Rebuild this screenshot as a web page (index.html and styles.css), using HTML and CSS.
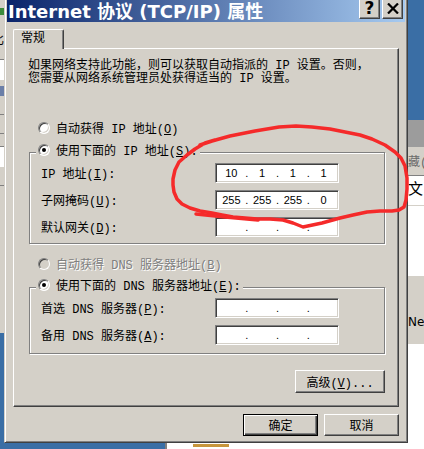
FILE: index.html
```html
<!DOCTYPE html>
<html lang="zh-CN">
<head>
  <meta charset="UTF-8" />
  <title>Internet 协议 (TCP/IP) 属性</title>
  <link rel="stylesheet" href="styles.css">
</head>
<body>
  <!-- windows behind the dialog -->
  <div class="win-left">
    <div class="wl-icon"></div>
    <div class="wl-char">比</div>
    <div class="wl-box"></div>
    <div class="wl-blue"></div>
    <div class="wl-line"></div>
    <div class="wl-line"></div>
    <div class="wl-box"></div>
    <div class="wl-line"></div>
  </div>

  <div class="win-right">
    <div class="wr-caption"></div>
    <div class="wr-bar">藏(</div>
    <div class="wr-row">文</div>
    <div class="wr-list"></div>
    <div class="wr-gray">Net</div>
  </div>

  <div class="win-bottom"><span class="wb-tan"></span></div>

  <div class="dialog">
    <div class="titlebar">
      <span class="title">Internet 协议 (TCP/IP) 属性</span>
      <span class="cap-btn">?</span>
      <span class="cap-btn">
        <svg width="12" height="11" viewBox="0 0 12 11"><path d="M1 0.5 L11 10.5 M11 0.5 L1 10.5" stroke="#000" stroke-width="2.2" fill="none"/></svg>
      </span>
    </div>

    <div class="dlg-body">
      <div class="tabs"><div class="tab">常规</div></div>

      <div class="panel">
        <p class="intro">如果网络支持此功能，则可以获取自动指派的 IP 设置。否则，<br>您需要从网络系统管理员处获得适当的 IP 设置。</p>

        <div class="radio r-first"><span class="rb"></span><span>自动获得 IP 地址<span class="key">(<u>O</u>)</span></span></div>
        <div class="radio r-legend"><span class="rb on"></span><span>使用下面的 IP 地址<span class="key">(<u>S</u>):</span></span></div>
        <div class="group">
          <span class="lbl">IP 地址<span class="key">(<u>I</u>):</span></span>
          <div class="ip"><span class="oct">10</span><span class="sep">.</span><span class="oct">1</span><span class="sep">.</span><span class="oct">1</span><span class="sep">.</span><span class="oct">1</span></div>
          <span class="lbl">子网掩码<span class="key">(<u>U</u>):</span></span>
          <div class="ip"><span class="oct">255</span><span class="sep">.</span><span class="oct">255</span><span class="sep">.</span><span class="oct">255</span><span class="sep">.</span><span class="oct">0</span></div>
          <span class="lbl">默认网关<span class="key">(<u>D</u>):</span></span>
          <div class="ip"><span class="oct"></span><span class="sep">.</span><span class="oct"></span><span class="sep">.</span><span class="oct"></span><span class="sep">.</span><span class="oct"></span></div>
        </div>

        <div class="radio r-dns disabled"><span class="rb"></span><span>自动获得 DNS 服务器地址<span class="key">(<u>B</u>)</span></span></div>
        <div class="radio r-legend"><span class="rb on"></span><span>使用下面的 DNS 服务器地址<span class="key">(<u>E</u>):</span></span></div>
        <div class="group group-dns">
          <span class="lbl">首选 DNS 服务器<span class="key">(<u>P</u>):</span></span>
          <div class="ip"><span class="oct"></span><span class="sep">.</span><span class="oct"></span><span class="sep">.</span><span class="oct"></span><span class="sep">.</span><span class="oct"></span></div>
          <span class="lbl">备用 DNS 服务器<span class="key">(<u>A</u>):</span></span>
          <div class="ip"><span class="oct"></span><span class="sep">.</span><span class="oct"></span><span class="sep">.</span><span class="oct"></span><span class="sep">.</span><span class="oct"></span></div>
        </div>

        <button class="btn adv">高级<span class="key">(<u>V</u>)...</span></button>
      </div>

      <div class="actions">
        <button class="btn default">确定</button>
        <button class="btn">取消</button>
      </div>
    </div>
  </div>

  <!-- red marker scribble drawn over the screenshot -->
  <svg class="scribble" width="424" height="449" viewBox="0 0 424 449">
    <polyline fill="none" stroke="#f52a2a" stroke-width="3.5" stroke-linejoin="round" stroke-linecap="round"
      points="200,145 212,141 230,136 255,131 279,127 296,126 312,127 330,129 345,132 360,135 372,139 385,145 395,152 401,158 405,166 407,178 407,189 406,200 404,207 399,210 392,211 380,211 367,212 353,215 340,218 322,223 303,227 293,223 283,220 270,219 257,219 245,218 233,217 222,215 212,213 200,211 190,208 182,204 177,199 174,192 173,185 173,179 175,170 179,162 187,155 195,149 205,143 215,140"/>
    <polyline fill="none" stroke="#f52a2a" stroke-width="3.5" stroke-linejoin="round" stroke-linecap="round"
      points="196,214 225,217 258,220"/>
  </svg>
</body>
</html>
```

FILE: styles.css
```css
body {
  margin: 0;
  width: 424px;
  height: 449px;
  overflow: hidden;
  position: relative;
  background: #3a6ea5;
  font-family: "Liberation Mono", "Noto Sans CJK SC", monospace;
  font-size: 12px;
  color: #000;
}

/* background windows */
.win-left {
  position: absolute;
  left: 0;
  top: 0;
  width: 6px;
  height: 333px;
  background: #d4d0c8;
  display: flex;
  flex-direction: column;
}

.wl-icon {
  margin-top: 8px;
  height: 7px;
  background: #3c8c3c;
}

.wl-char {
  margin-top: 20px;
  margin-left: -8px;
  line-height: 12px;
}

.wl-box {
  margin-top: 12px;
  height: 20px;
  background: #fff;
  border-top: 1px solid #808080;
}

.wl-blue {
  margin-top: 6px;
  height: 10px;
  background: #6b7fa8;
}

.wl-line {
  margin-top: 18px;
  height: 1px;
  background: #808080;
}

.win-right {
  position: absolute;
  left: 398px;
  top: 120px;
  width: 30px;
  bottom: 0;
  background: #fff;
  display: flex;
  flex-direction: column;
}

.wr-caption {
  height: 27px;
  background: #9c9c9c;
}

.wr-bar {
  height: 28px;
  background: #d4d0c8;
  border-bottom: 1px solid #808080;
  padding-left: 10px;
  line-height: 32px;
  color: #6a6a6a;
  white-space: nowrap;
}

.wr-row {
  height: 29px;
  border-bottom: 1px solid #d4d0c8;
  padding-left: 10px;
  font-size: 15px;
  line-height: 30px;
}

.wr-list {
  height: 70px;
}

.wr-gray {
  height: 68px;
  background: #d4d0c8;
  padding-left: 10px;
  font-family: "DejaVu Sans", sans-serif;
  line-height: 18px;
  padding-top: 37px;
  box-sizing: border-box;
}

.win-bottom {
  position: absolute;
  left: 165px;
  top: 440px;
  right: 0;
  bottom: 0;
  background: #fff;
  border-left: 2px solid #808080;
  display: flex;
  align-items: flex-start;
  padding-left: 26px;
}

.wb-tan {
  margin-top: 4px;
  width: 36px;
  height: 3px;
  background: #c8963c;
}

/* dialog frame */
.dialog {
  position: absolute;
  left: 4px;
  top: -5px;
  width: 404px;
  height: 448px;
  box-sizing: border-box;
  padding: 2px;
  background: #d4d0c8;
  border: 1px solid;
  border-color: #d4d0c8 #404040 #404040 #d4d0c8;
  box-shadow: inset 1px 1px #fff, inset -1px -1px #808080;
  display: flex;
  flex-direction: column;
}

.titlebar {
  height: 24px;
  flex-shrink: 0;
  display: flex;
  align-items: center;
  gap: 2px;
  padding: 0 2px 0 1px;
  background: linear-gradient(to right, #0a246a, #a6caf0);
}

.title {
  flex: 1;
  color: #fff;
  font-family: "DejaVu Sans", "Noto Sans CJK SC", sans-serif;
  font-weight: bold;
  font-size: 18px;
  white-space: nowrap;
  overflow: hidden;
}

.cap-btn {
  align-self: flex-start;
  width: 21px;
  height: 21px;
  box-sizing: border-box;
  background: #d4d0c8;
  border: 1px solid;
  border-color: #fff #404040 #404040 #fff;
  box-shadow: inset -1px -1px #808080;
  display: flex;
  align-items: center;
  justify-content: center;
  font-family: "DejaVu Sans", sans-serif;
  font-weight: bold;
  font-size: 17px;
  line-height: 19px;
}

.dlg-body {
  flex: 1;
  display: flex;
  flex-direction: column;
  padding: 7px 6px 0 6px;
}

/* tab */
.tabs {
  display: flex;
}

.tab {
  position: relative;
  width: 51px;
  height: 20px;
  box-sizing: border-box;
  margin-bottom: -1px;
  padding-left: 7px;
  line-height: 18px;
  background: #d4d0c8;
  border: 1px solid;
  border-bottom: none;
  border-color: #fff #404040 #d4d0c8 #fff;
  border-radius: 2px 2px 0 0;
  box-shadow: inset -1px 0 #808080;
}

.panel {
  height: 359px;
  box-sizing: border-box;
  border: 1px solid;
  border-color: #fff #404040 #404040 #fff;
  box-shadow: inset -1px -1px #808080;
  display: flex;
  flex-direction: column;
}

.intro {
  margin: 11px 0 0 14px;
  line-height: 13px;
  white-space: nowrap;
}

/* mnemonic part of a label, in the narrow latin face */
.key {
  font-family: "Liberation Mono", monospace;
}

/* radio rows */
.radio {
  position: relative;
  align-self: flex-start;
  display: flex;
  align-items: center;
  gap: 6px;
  height: 14px;
  margin-left: 22px;
  padding: 0 2px;
  background: #d4d0c8;
  white-space: nowrap;
}

.r-first {
  margin-top: 35px;
}

.r-legend {
  margin-top: 8px;
}

.r-dns {
  margin-top: 13px;
}

.r-dns + .r-legend {
  margin-top: 7px;
}

.rb {
  width: 12px;
  height: 12px;
  box-sizing: border-box;
  flex-shrink: 0;
  border-radius: 50%;
  border: 1px solid;
  border-color: #808080 #fff #fff #808080;
  box-shadow: inset 1px 1px #404040, inset -1px -1px #d4d0c8;
  background: #fff;
  display: flex;
  align-items: center;
  justify-content: center;
}

.rb.on::after {
  content: "";
  width: 4px;
  height: 4px;
  border-radius: 50%;
  background: #000;
}

.disabled {
  color: #808080;
  text-shadow: 1px 1px #fff;
}

.disabled .rb {
  background: #d4d0c8;
}

/* group boxes */
.group {
  margin: -5px 13px 0 15px;
  padding: 10px 0 6px 11px;
  border: 1px solid #808080;
  box-shadow: inset 1px 1px #fff, 1px 1px #fff;
  display: grid;
  grid-template-columns: 174px 124px;
  grid-auto-rows: 20px;
  row-gap: 7px;
  align-items: center;
}

.group-dns {
  padding-bottom: 8px;
}

.lbl {
  white-space: nowrap;
}

.ip {
  height: 20px;
  box-sizing: border-box;
  padding-left: 1px;
  background: #fff;
  border: 1px solid;
  border-color: #808080 #fff #fff #808080;
  box-shadow: inset 1px 1px #404040, inset -1px -1px #d4d0c8;
  display: flex;
  align-items: center;
  font-family: "Liberation Sans", sans-serif;
  font-size: 11px;
}

.oct {
  width: 29px;
  text-align: center;
}

.sep {
  width: 2px;
  display: flex;
  justify-content: center;
}

/* push buttons */
.btn {
  font-family: "Liberation Mono", "Noto Sans CJK SC", monospace;
  font-size: 12px;
  color: #000;
  padding: 0;
  background: #d4d0c8;
  border: 1px solid;
  border-color: #fff #404040 #404040 #fff;
  box-shadow: inset -1px -1px #808080;
  border-radius: 0;
}

.adv {
  align-self: flex-end;
  margin: 16px 13px 0 0;
  width: 90px;
  height: 23px;
}

.actions {
  display: flex;
  justify-content: flex-end;
  gap: 6px;
  margin-top: 7px;
}

.actions .btn {
  width: 75px;
  height: 22px;
}

.btn.default {
  border-color: #000;
  box-shadow: inset 1px 1px #fff, inset -1px -1px #404040, inset -2px -2px #808080;
}

u {
  text-decoration: underline;
  text-underline-offset: 1px;
}

.scribble {
  position: absolute;
  left: 0;
  top: 0;
  pointer-events: none;
}
```
